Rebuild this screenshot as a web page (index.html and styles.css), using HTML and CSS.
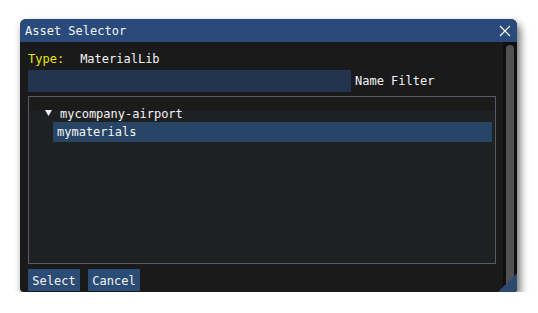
FILE: index.html
```html
<!DOCTYPE html>
<html lang="en">
<head>
  <meta charset="UTF-8" />
  <title>Asset Selector</title>
  <link rel="stylesheet" href="styles.css">
</head>
<body>
  <div class="window">
    <div class="title-bar">
      <span class="title">Asset Selector</span>
      <svg class="close" width="12" height="12" viewBox="0 0 12 12">
        <path d="M1 1 L11 11 M11 1 L1 11" stroke="#fff" stroke-width="1.2" fill="none" />
      </svg>
    </div>
    <div class="window-body">
      <div class="content">
        <div class="type-row">
          <span class="type-label">Type:</span>
          <span class="type-value">MaterialLib</span>
        </div>
        <div class="filter-row">
          <input type="text" class="filter-input" />
          <span class="filter-label">Name Filter</span>
        </div>
        <div class="tree">
          <div class="tree-node">
            <svg class="arrow" width="7" height="6" viewBox="0 0 7 6">
              <path d="M0 0 L7 0 L3.5 6 Z" fill="#f2f2f2" />
            </svg>
            <span>mycompany-airport</span>
          </div>
          <div class="tree-leaf selected">mymaterials</div>
        </div>
        <div class="buttons">
          <button class="btn">Select</button>
          <button class="btn">Cancel</button>
        </div>
      </div>
      <div class="scrollbar">
        <div class="grab"></div>
      </div>
    </div>
    <div class="resize-grip"></div>
  </div>
</body>
</html>
```

FILE: styles.css
```css
html, body {
  margin: 0;
  padding: 0;
  background: #ffffff;
  font-family: 'DejaVu Sans Mono', monospace;
  font-size: 12px;
  color: #f4f4f4;
}
body {
  padding: 19px 0 0 20px;
}
.window {
  position: relative;
  width: 497px;
  height: 273px;
  display: flex;
  flex-direction: column;
  background: #1a1a1a;
  border-radius: 6px 6px 4px 4px;
  overflow: hidden;
  box-shadow: 3px 5px 9px rgba(0, 0, 0, 0.6);
}
.title-bar {
  height: 23px;
  box-sizing: border-box;
  background: #294a7a;
  display: flex;
  align-items: center;
  justify-content: space-between;
  padding: 2px 6px 0 5px;
  flex-shrink: 0;
}
.title {
  line-height: 21px;
}
.close {
  display: block;
  margin-top: -2px;
}
.window-body {
  flex: 1;
  display: flex;
  min-height: 0;
}
.content {
  flex: 1;
  display: flex;
  flex-direction: column;
  padding: 10px 7px 0 8px;
}
.type-row {
  height: 14px;
  line-height: 14px;
  display: flex;
  gap: 16px;
}
.type-label {
  color: #e8e600;
}
.filter-row {
  display: flex;
  align-items: center;
  gap: 4px;
  margin-top: 4px;
}
.filter-input {
  width: 323px;
  height: 22px;
  box-sizing: border-box;
  border: none;
  background: #22344f;
  margin: 0;
  padding: 0;
  outline: none;
}
.tree {
  height: 168px;
  box-sizing: border-box;
  margin-top: 4px;
  border: 1px solid #5a5a66;
  background: linear-gradient(to bottom, #1b1b1b 0, #1b1b1b 14px, #1f2021 14px);
  padding: 8px 3px 0 16px;
}
.tree-node {
  display: flex;
  align-items: center;
  gap: 8px;
  height: 17px;
}
.arrow {
  display: block;
  margin-top: -2px;
}
.tree-leaf {
  height: 20px;
  line-height: 20px;
  margin-left: 8px;
  padding-left: 4px;
}
.selected {
  background: #264466;
}
.buttons {
  display: flex;
  gap: 8px;
  margin-top: 5px;
}
.btn {
  height: 22px;
  width: 52px;
  border: none;
  background: #2b4c74;
  color: #f4f4f4;
  font-family: 'DejaVu Sans Mono', monospace;
  font-size: 12px;
  padding: 1px 0 0 0;
}
.scrollbar {
  width: 14px;
  background: #0f0f0f;
  padding: 3px 3px 2px 3px;
  box-sizing: border-box;
  display: flex;
}
.grab {
  flex: 1;
  background: #525252;
  border-radius: 4px;
}
.resize-grip {
  position: absolute;
  right: 0;
  bottom: 0;
  width: 19px;
  height: 19px;
  background: #2c4a70;
  clip-path: polygon(100% 0, 100% 100%, 0 100%);
}
```
